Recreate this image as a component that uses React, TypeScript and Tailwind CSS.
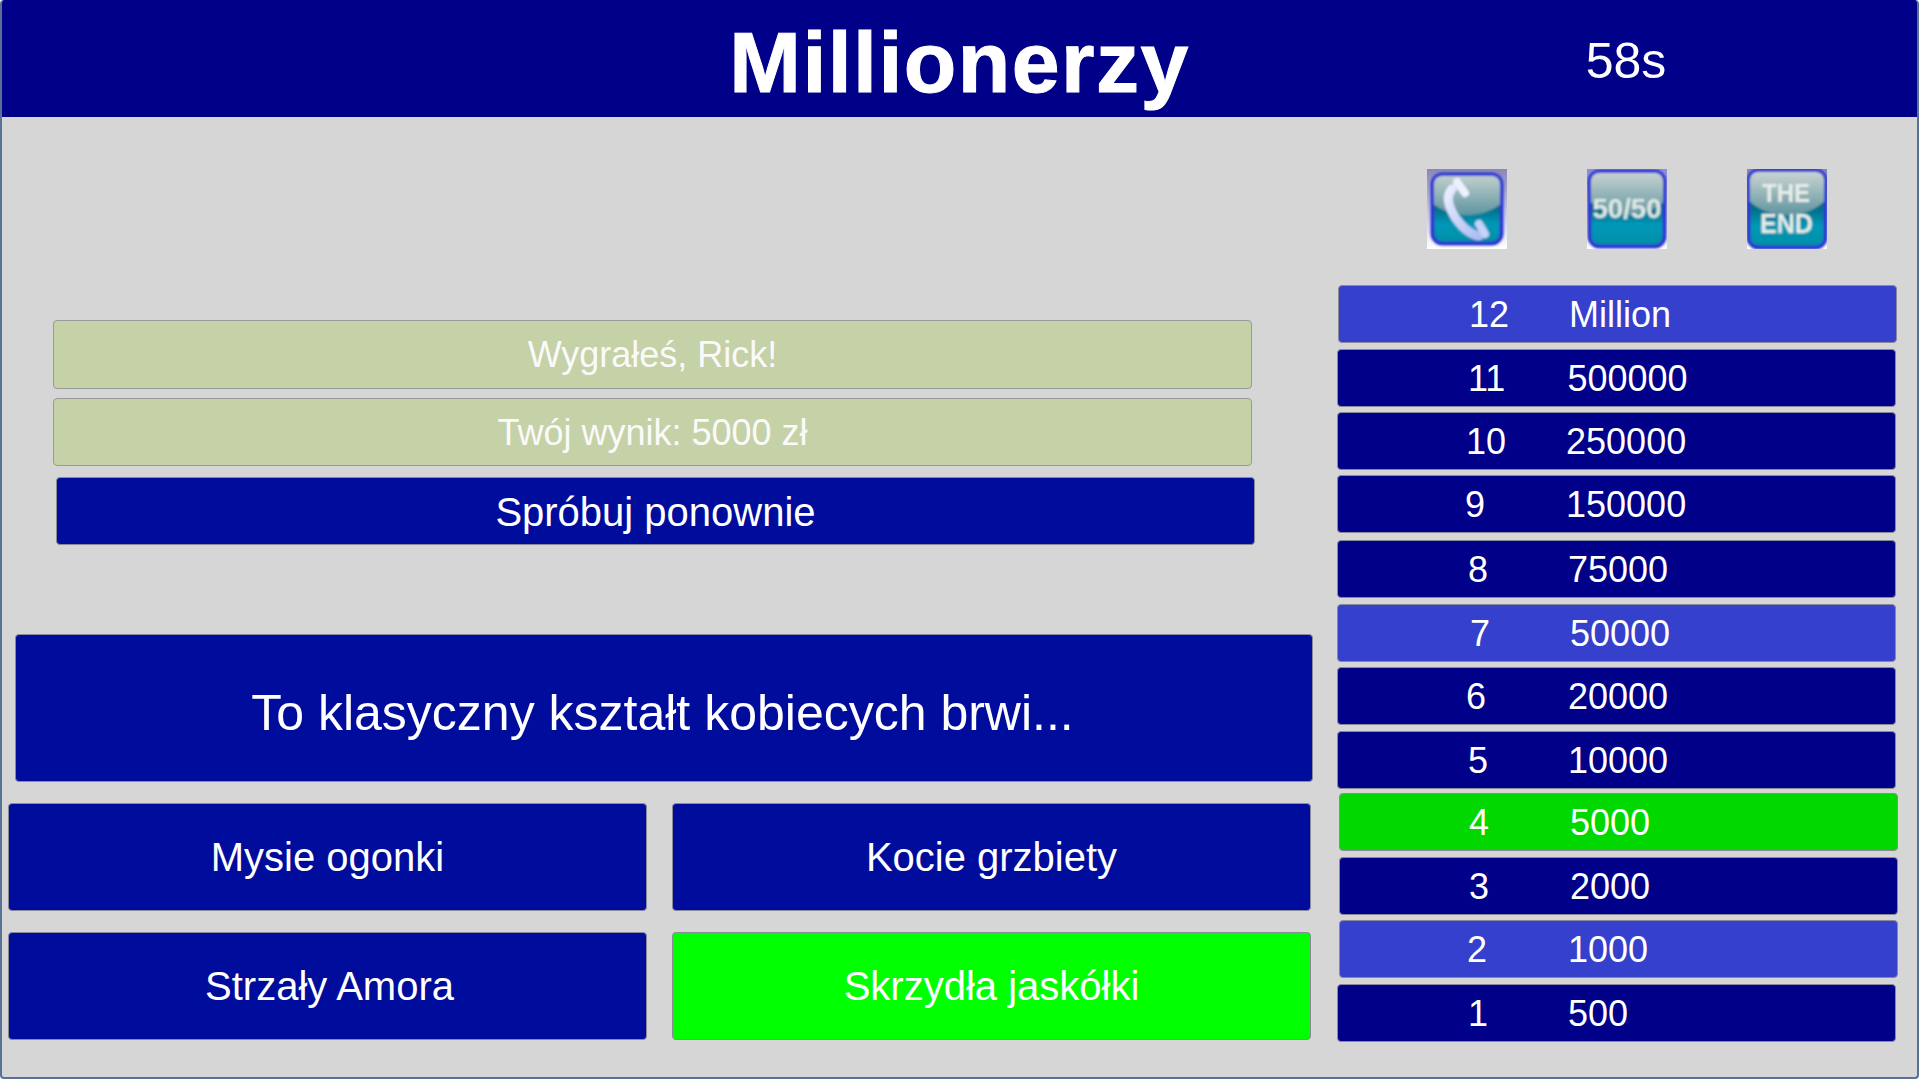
const sans = "font-['Liberation_Sans',Arial,sans-serif]";

function IconFrame({ id, corner, inset, children }: { id: string; corner: string; inset: number; children?: React.ReactNode }) {
  const size = 80 - inset * 2;
  return (
    <svg width="80" height="80" viewBox="0 0 80 80" className="block">
      <defs>
        <linearGradient id={`${id}-corner`} x1="0" y1="0" x2="0" y2="1">
          <stop offset="0" stopColor={corner} />
          <stop offset="0.55" stopColor="#c9c8e6" />
          <stop offset="1" stopColor="#ffffff" />
        </linearGradient>
        <linearGradient id={`${id}-base`} x1="0" y1="0" x2="0" y2="1">
          <stop offset="0" stopColor="#00596e" />
          <stop offset="0.5" stopColor="#006f8a" />
          <stop offset="0.72" stopColor="#0098b8" />
          <stop offset="1" stopColor="#008ea6" />
        </linearGradient>
        <linearGradient id={`${id}-gloss`} x1="0" y1="0" x2="0" y2="1">
          <stop offset="0" stopColor="#d2d8d6" />
          <stop offset="1" stopColor="#5f959f" />
        </linearGradient>
        <linearGradient id={`${id}-hand`} x1="0" y1="0" x2="1" y2="1">
          <stop offset="0" stopColor="#e8edff" />
          <stop offset="1" stopColor="#aebcf4" />
        </linearGradient>
        <filter id={`${id}-soft`} x="-10%" y="-10%" width="120%" height="120%">
          <feGaussianBlur stdDeviation="0.8" />
        </filter>
        <clipPath id={`${id}-clip`}>
          <rect x={inset + 3} y={inset + 3} width={size - 6} height={size - 6} rx="8" />
        </clipPath>
      </defs>
      <rect width="80" height="80" fill={`url(#${id}-corner)`} />
      <g filter={`url(#${id}-soft)`}>
        <rect x={inset + 1.5} y={inset + 1.5} width={size - 3} height={size - 3} rx="10" fill={`url(#${id}-base)`} stroke="#2c36d2" strokeWidth="4" />
        <g clipPath={`url(#${id}-clip)`}>
          <path d="M0 0 H80 V30 C66 43 52 46 40 46 C28 46 14 43 0 30 Z" fill={`url(#${id}-gloss)`} />
        </g>
        {children}
      </g>
    </svg>
  );
}

function PhoneIcon() {
  return (
    <IconFrame id="phone" corner="#8a86ba" inset={4}>
      <path d="M25 20 C19 27 21 37 28 48 C34 57 42 65 52 67" fill="none" stroke="url(#phone-hand)" strokeWidth="9" strokeLinecap="round" />
      <path d="M30 13 L38 24" stroke="#eef1ff" strokeWidth="8" strokeLinecap="round" />
      <path d="M52 55 L58 65" stroke="#c6d2f8" strokeWidth="8" strokeLinecap="round" />
    </IconFrame>
  );
}

function FiftyIcon() {
  return (
    <IconFrame id="fifty" corner="#8f8dd8" inset={1}>
      <text x="40" y="49" textAnchor="middle" fontSize="28" fontWeight="700" fontFamily="'Liberation Sans',sans-serif" textLength="69" lengthAdjust="spacingAndGlyphs" fill="#dfe9e6">50/50</text>
    </IconFrame>
  );
}

function EndIcon() {
  return (
    <IconFrame id="end" corner="#8a86ba" inset={0}>
      <text x="39" y="33" textAnchor="middle" fontSize="25" fontWeight="700" fontFamily="'Liberation Sans',sans-serif" textLength="48" lengthAdjust="spacingAndGlyphs" fill="#e8eee8">THE</text>
      <text x="39.5" y="64" textAnchor="middle" fontSize="27" fontWeight="700" fontFamily="'Liberation Sans',sans-serif" textLength="53" lengthAdjust="spacingAndGlyphs" fill="#e8eee8">END</text>
    </IconFrame>
  );
}

const rows = [
  { n: "12", v: "Million", bg: "bg-[#3540cc]", row: "ml-[1px]", num: "pl-[130px]", val: "pl-[60px]" },
  { n: "11", v: "500000", bg: "bg-[#000088]", row: "mt-[6px]", num: "pl-[130px]", val: "pl-[62px]" },
  { n: "10", v: "250000", bg: "bg-[#000088]", row: "mt-[5px]", num: "pl-[128px]", val: "pl-[60px]" },
  { n: "9", v: "150000", bg: "bg-[#000088]", row: "mt-[5px]", num: "pl-[127px]", val: "pl-[81px]" },
  { n: "8", v: "75000", bg: "bg-[#000088]", row: "mt-[7px]", num: "pl-[130px]", val: "pl-[80px]" },
  { n: "7", v: "50000", bg: "bg-[#3540cc]", row: "mt-[6px]", num: "pl-[132px]", val: "pl-[80px]" },
  { n: "6", v: "20000", bg: "bg-[#000088]", row: "mt-[5px]", num: "pl-[128px]", val: "pl-[82px]" },
  { n: "5", v: "10000", bg: "bg-[#000088]", row: "mt-[6px]", num: "pl-[130px]", val: "pl-[80px]" },
  { n: "4", v: "5000", bg: "bg-[#00d800]", row: "ml-[2px] mt-[4px]", num: "pl-[129px]", val: "pl-[81px]" },
  { n: "3", v: "2000", bg: "bg-[#000088]", row: "ml-[2px] mt-[6px]", num: "pl-[129px]", val: "pl-[81px]" },
  { n: "2", v: "1000", bg: "bg-[#3540cc]", row: "ml-[2px] mt-[5px]", num: "pl-[127px]", val: "pl-[81px]" },
  { n: "1", v: "500", bg: "bg-[#000088]", row: "mt-[6px]", num: "pl-[130px]", val: "pl-[80px]" },
];

function Answer({ label, className }: { label: string; className: string }) {
  return (
    <div className={`flex h-[108px] items-center justify-center rounded-[4px] border border-[#8a8a9a] text-[40px] text-white ${className}`}>
      {label}
    </div>
  );
}

export default function App() {
  return (
    <div className={`h-[1079px] w-full overflow-hidden rounded-[4px] border-b-2 border-l-2 border-r-2 border-[#5a7196] bg-[#d6d6d6] ${sans}`}>
      <header className="-mx-[2px] grid h-[117px] grid-cols-[1fr_auto_1fr] items-center rounded-b-[3px] bg-[#000088] text-white">
        <div />
        <h1 className="pt-[6px] text-[86px] leading-none font-bold tracking-[1.45px] [-webkit-text-stroke:1px_white]">Millionerzy</h1>
        <div className="pl-[396px] pt-[4px] text-[50px] leading-none">58s</div>
      </header>

      <main className="flex">
        <section className="w-[1335px] shrink-0">
          <div className="mt-[203px] ml-[51px] flex h-[69px] w-[1199px] items-center justify-center rounded-[4px] border border-[#9a9a9a] bg-[#c5d1a6] text-[36px] text-[#fafafa]">
            Wygrałeś, Rick!
          </div>
          <div className="mt-[9px] ml-[51px] flex h-[68px] w-[1199px] items-center justify-center rounded-[4px] border border-[#9a9a9a] bg-[#c5d1a6] pt-[1px] text-[36px] text-[#fafafa]">
            Twój wynik: 5000 zł
          </div>
          <div className="mt-[11px] ml-[54px] flex h-[68px] w-[1199px] items-center justify-center rounded-[4px] border border-[#8a8a9a] bg-[#000c9c] pt-[1px] text-[40px] text-white">
            Spróbuj ponownie
          </div>
          <div className="mt-[89px] ml-[13px] flex h-[148px] w-[1298px] items-center justify-center rounded-[4px] border border-[#8a8a9a] bg-[#000c9c] pt-[10px] pr-[3px] text-[50px] text-white">
            To klasyczny kształt kobiecych brwi...
          </div>
          <div className="mt-[21px] ml-[6px] grid grid-cols-[639px_639px] gap-x-[25px] gap-y-[21px]">
            <Answer label="Mysie ogonki" className="bg-[#000c9c]" />
            <Answer label="Kocie grzbiety" className="bg-[#000c9c]" />
            <Answer label="Strzały Amora" className="bg-[#000c9c] pl-[4px]" />
            <Answer label="Skrzydła jaskółki" className="bg-[#00ff00]" />
          </div>
        </section>

        <aside className="w-[560px] shrink-0">
          <div className="mt-[52px] ml-[90px] flex gap-[80px]">
            <PhoneIcon />
            <FiftyIcon />
            <EndIcon />
          </div>
          <div className="mt-[36px] flex flex-col">
            {rows.map((r) => (
              <div
                key={r.n}
                className={`flex h-[58px] w-[559px] shrink-0 items-center rounded-[4px] border border-[#8a8a9a] pt-[1px] text-[36px] leading-none text-white ${r.bg} ${r.row}`}
              >
                <span className={r.num}>{r.n}</span>
                <span className={r.val}>{r.v}</span>
              </div>
            ))}
          </div>
        </aside>
      </main>
    </div>
  );
}
